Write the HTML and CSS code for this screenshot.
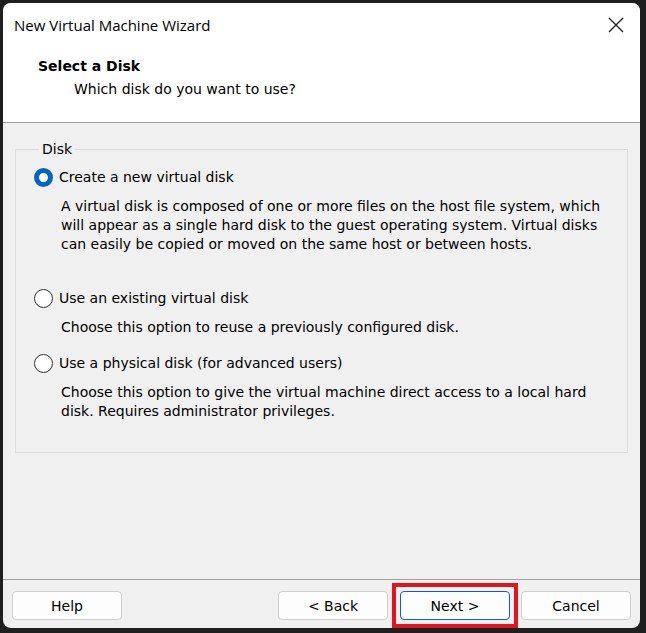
FILE: index.html
```html
<!DOCTYPE html>
<html lang="en">
<head>
    <meta charset="UTF-8">
    <title>New Virtual Machine Wizard</title>
    <link rel="stylesheet" href="styles.css">
</head>
<body>
    <div class="window">
        <div class="titlebar">
            <span class="title">New Virtual Machine Wizard</span>
            <svg class="close" width="16" height="16" viewBox="0 0 16 16">
                <path d="M1 1 L15 15 M15 1 L1 15" stroke="#1a1a1a" stroke-width="1.3" fill="none"/>
            </svg>
        </div>

        <!-- page header -->
        <div class="header">
            <div class="h-title">Select a Disk</div>
            <div class="h-sub">Which disk do you want to use?</div>
        </div>

        <div class="content">
            <fieldset class="group">
                <legend>Disk</legend>

                <label class="opt first">
                    <input type="radio" name="disk" checked>
                    <span class="radio"></span>
                    <span>Create a new virtual disk</span>
                </label>
                <p class="desc">A virtual disk is composed of one or more files on the host file system, which will appear as a single hard disk to the guest operating system. Virtual disks can easily be copied or moved on the same host or between hosts.</p>

                <label class="opt second">
                    <input type="radio" name="disk">
                    <span class="radio"></span>
                    <span>Use an existing virtual disk</span>
                </label>
                <p class="desc">Choose this option to reuse a previously configured disk.</p>

                <label class="opt third">
                    <input type="radio" name="disk">
                    <span class="radio"></span>
                    <span>Use a physical disk (for advanced users)</span>
                </label>
                <p class="desc">Choose this option to give the virtual machine direct access to a local hard disk. Requires administrator privileges.</p>
            </fieldset>
        </div>

        <div class="footer">
            <button class="btn">Help</button>
            <div class="spacer"></div>
            <button class="btn">&lt; Back</button>
            <span class="mark"><button class="btn default">Next &gt;</button></span>
            <button class="btn">Cancel</button>
        </div>
    </div>
</body>
</html>
```

FILE: styles.css
```css
* { margin: 0; padding: 0; box-sizing: border-box; }
body { background: #1f1f1f; padding: 3px 6px 5px 3px; font-family: "DejaVu Sans", sans-serif; font-size: 14px; color: #000; }
.window { width: 637px; height: 625px; background: #f0f0f0; border-radius: 8px; overflow: hidden; display: flex; flex-direction: column; }

.titlebar { height: 44px; background: #fff; display: flex; align-items: center; justify-content: space-between; padding: 0 16px 0 11px; }
.title { font-family: "Open Sans", sans-serif; font-size: 15px; color: #000; }
.close { display: block; }

.header { height: 76px; background: #fff; border-bottom: 1px solid #a0a0a0; padding: 9px 0 0 35px; }
.h-title { font-weight: bold; line-height: 20px; }
.h-sub { margin: 3px 0 0 36px; line-height: 20px; }

.content { flex: 1; padding: 17px 12px 0 12px; }
.group { border: 1px solid #dcdcdc; height: 313px; padding: 4px 12px 0 18px; }
.group legend { margin-left: 5px; padding: 0 3px; line-height: 18px; }

.opt { display: flex; align-items: center; gap: 6px; line-height: 20px; }
.opt input { display: none; }
.radio { width: 19px; height: 19px; border-radius: 50%; border: 1px solid #333; background: #fff; flex: none; }
.opt input:checked + .radio { background: #fff; border: 5px solid #0067c0; }
.opt.first { margin-top: 5px; }
.opt.second { margin-top: 34px; }
.opt.third { margin-top: 16px; }
.desc { margin: 10px 0 0 27px; line-height: 19px; }

.footer { height: 49px; border-top: 1px solid #a0a0a0; display: flex; align-items: flex-start; padding: 11px 9px 0 9px; gap: 11px; }
.spacer { flex: 1; }
.btn { width: 110px; height: 29px; background: #fdfdfd; border: 1px solid #d0d0d0; border-radius: 4px; font-family: "DejaVu Sans", sans-serif; font-size: 14px; color: #000; }
.btn.default { border-color: #0067c0; }
.mark { outline: 4px solid #e3141e; outline-offset: 4px; display: block; height: 29px; margin-left: 1px; }
```
